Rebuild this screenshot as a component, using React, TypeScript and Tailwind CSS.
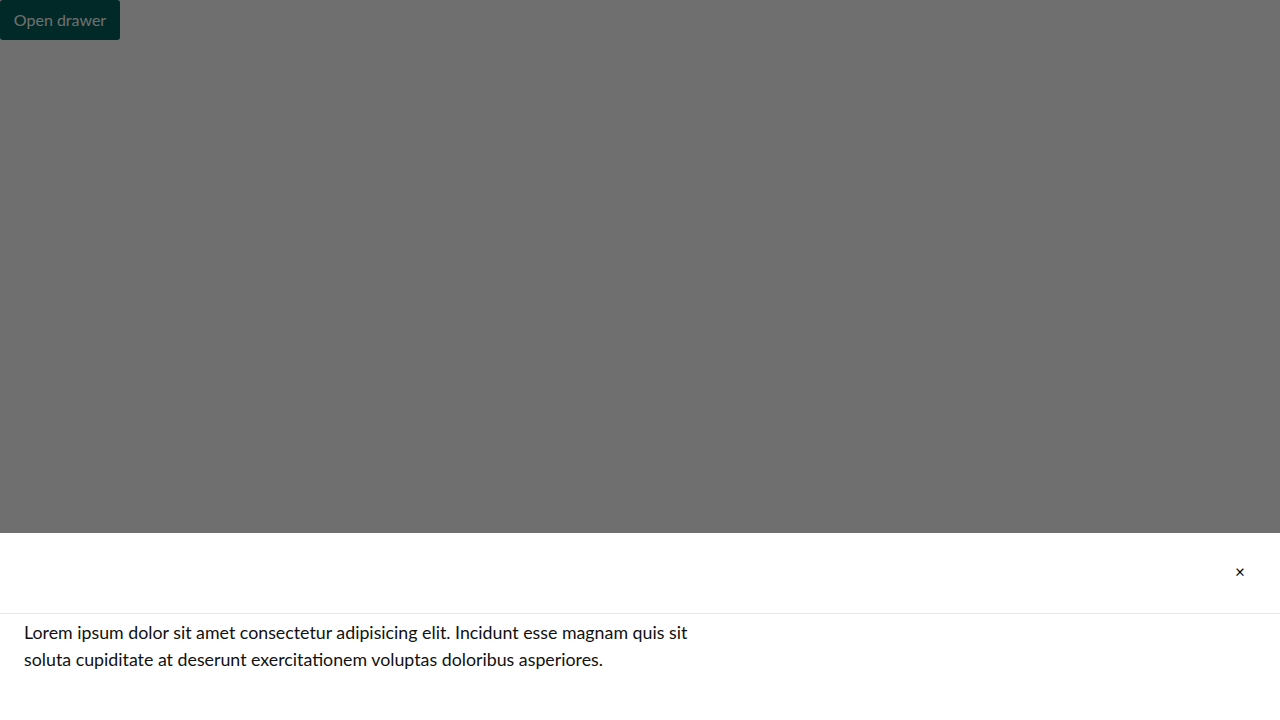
import React from "react";

export default function App() {
  return (
    <div className="relative h-[720px] w-[1280px] overflow-hidden bg-white" style={{ fontFamily: "Lato, 'Noto Sans', sans-serif" }}>
      <button className="h-10 w-[120px] rounded-[3px] bg-teal-800 text-[16px] text-white">Open drawer</button>
      <div className="absolute inset-0 bg-black/[0.565]" />
      <div className="absolute bottom-0 left-0 right-0 flex h-[187px] flex-col bg-white">
        <div className="flex h-[81px] shrink-0 items-center justify-end border-b border-gray-200 pr-6">
          <button className="mb-[3px] flex h-8 w-8 items-center justify-center text-[17px] leading-none text-black">×</button>
        </div>
        <p className="max-w-[740px] px-6 pt-[5px] text-[17.8px] leading-[27px] text-[#111]">
          Lorem ipsum dolor sit amet consectetur adipisicing elit. Incidunt esse magnam quis sit soluta cupiditate at deserunt exercitationem voluptas doloribus asperiores.
        </p>
      </div>
    </div>
  );
}
